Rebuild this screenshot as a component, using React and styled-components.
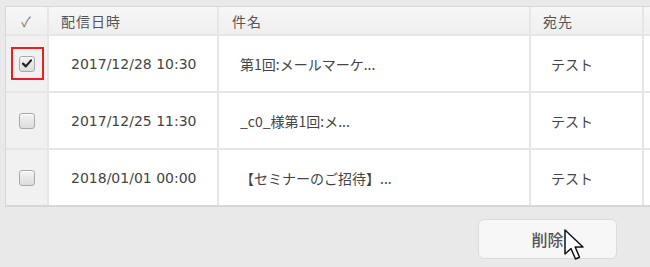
import React from "react";
import styled, { createGlobalStyle } from "styled-components";

const Global = createGlobalStyle`
  html, body { margin: 0; padding: 0; background: #e9e9e9; }
  body { width: 650px; height: 267px; overflow: hidden; font-family: "Noto Sans CJK JP", "Liberation Sans", sans-serif; }
`;

const Page = styled.div`
  position: relative;
  width: 650px;
  height: 267px;
  overflow: hidden;
  padding: 6px 0 0 5px;
  box-sizing: border-box;
`;

const Table = styled.div`
  width: 660px;
  border-top: 1px solid #d6d6d6;
  border-left: 1px solid #d6d6d6;
  border-bottom: 2px solid #d6d6d6;
  background: #fff;
`;

const Row = styled.div`
  display: grid;
  grid-template-columns: 43px 170px 312px 113px 1fr;
  height: ${(p) => p.$h}px;
  border-bottom: ${(p) => (p.$last ? "none" : "2px solid #e6e6e6")};
  box-sizing: border-box;
  background: ${(p) => (p.$head ? "linear-gradient(#f7f7f7, #efefef)" : "#fff")};
`;

const Cell = styled.div`
  display: flex;
  align-items: center;
  justify-content: ${(p) => (p.$center ? "center" : "flex-start")};
  padding-left: ${(p) => p.$pad || 0}px;
  border-right: 2px solid #e6e6e6;
  background: ${(p) => (p.$gray ? "#f1f1f1" : "transparent")};
  color: ${(p) => (p.$head ? "#555" : "#444")};
  font-size: ${(p) => (p.$head ? 14 : 14)}px;
  letter-spacing: ${(p) => (p.$head ? "1px" : "0")};
  font-family: ${(p) =>
    p.$mono ? '"DejaVu Sans", "Noto Sans CJK JP", sans-serif' : '"Noto Sans CJK JP", sans-serif'};
  white-space: nowrap;
  overflow: hidden;
  box-sizing: border-box;
`;

const Highlight = styled.div`
  width: 29px;
  height: 29px;
  border: 2px solid #e8201f;
  display: flex;
  align-items: center;
  justify-content: center;
  margin-left: 1px;
`;

const Box = styled.span`
  width: 14px;
  height: 14px;
  border: 1px solid #a9a9a9;
  border-radius: 3px;
  background: linear-gradient(#f4f4f4, #dcdcdc);
  display: flex;
  align-items: center;
  justify-content: center;
  box-shadow: inset 0 1px 0 #fff;
`;

const Footer = styled.div`
  display: flex;
  justify-content: flex-end;
  padding: 12px 33px 0 0;
`;

const Button = styled.button`
  width: 139px;
  height: 40px;
  border: 1px solid #dadada;
  border-radius: 6px;
  background: #f7f7f7;
  color: #555;
  font-family: "Noto Sans CJK JP", sans-serif;
  font-size: 16px;
  font-weight: 500;
`;

const Cursor = styled.svg`
  position: absolute;
  left: 563px;
  top: 228px;
`;

function Check({ checked }) {
  return (
    <Box>
      {checked && (
        <svg width="10" height="9" viewBox="0 0 10 9">
          <path d="M1 4.6 L3.8 7.4 L9 1.4" fill="none" stroke="#222" strokeWidth="2.2" strokeLinecap="round" strokeLinejoin="round" />
        </svg>
      )}
    </Box>
  );
}

const rows = [
  { date: "2017/12/28 10:30", title: "第1回:メールマーケ...", to: "テスト", checked: true },
  { date: "2017/12/25 11:30", title: "_c0_様第1回:メ...", to: "テスト" },
  { date: "2018/01/01 00:00", title: "【セミナーのご招待】...", to: "テスト" },
];

export default function App() {
  return (
    <>
      <Global />
      <Page>
        <Table>
          <Row $head $h={29}>
            <Cell $head $center>
              <span style={{ color: "#777" }}>✓</span>
            </Cell>
            <Cell $head $pad={12}>配信日時</Cell>
            <Cell $head $pad={13}>件名</Cell>
            <Cell $head $pad={12}>宛先</Cell>
            <Cell $head />
          </Row>
          {rows.map((r, i) => (
            <Row key={i} $h={i === 2 ? 55 : 57} $last={i === 2}>
              <Cell $gray $center>
                {r.checked ? (
                  <Highlight>
                    <Check checked />
                  </Highlight>
                ) : (
                  <Check />
                )}
              </Cell>
              <Cell $mono $pad={22}>{r.date}</Cell>
              <Cell $pad={21}>{r.title}</Cell>
              <Cell $pad={20}>{r.to}</Cell>
              <Cell />
            </Row>
          ))}
        </Table>
        <Footer>
          <Button>削除</Button>
        </Footer>
        <Cursor width="24" height="36" viewBox="0 0 24 36">
          <path d="M2 2 L2 26 L8 20.5 L12.5 31 L16.5 29.2 L12.2 19 L20 19 Z" fill="#fff" stroke="#111" strokeWidth="1.5" strokeLinejoin="round" />
        </Cursor>
      </Page>
    </>
  );
}
